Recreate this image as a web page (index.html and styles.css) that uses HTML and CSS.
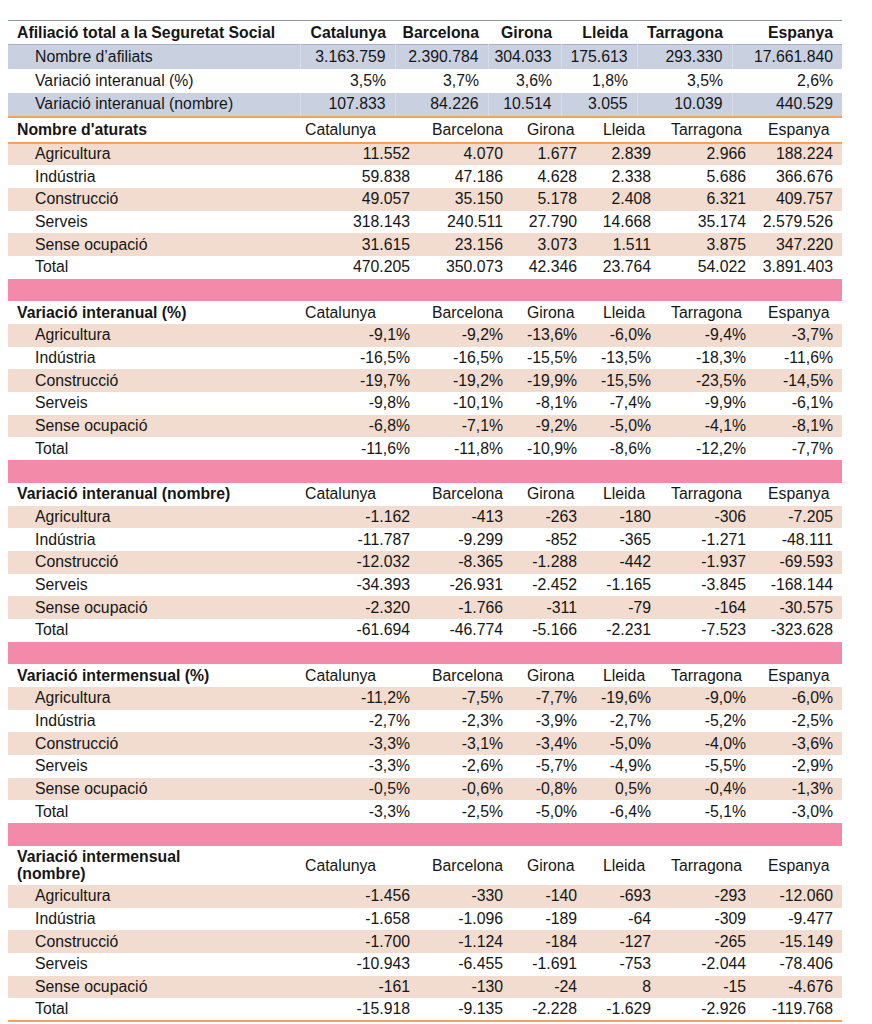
FILE: index.html
```html
<!DOCTYPE html>
<html lang="ca">
<head>
  <meta charset="UTF-8">
  <title>Afiliació i atur</title>
  <link rel="stylesheet" href="styles.css">
</head>
<body>
  <div class="sheet">
    <table class="afil">
      <colgroup>
        <col class="w-a0"><col class="w-a1"><col class="w-a2"><col class="w-a3"><col class="w-a4"><col class="w-a5"><col class="w-a6">
      </colgroup>
      <tr class="head">
        <th class="label">Afiliació total a la Seguretat Social</th>
        <th>Catalunya</th><th>Barcelona</th><th>Girona</th><th>Lleida</th><th>Tarragona</th><th>Espanya</th>
      </tr>
      <tr class="blue">
        <td class="sub">Nombre d’afiliats</td>
        <td>3.163.759</td><td>2.390.784</td><td>304.033</td><td>175.613</td><td>293.330</td><td>17.661.840</td>
      </tr>
      <tr>
        <td class="sub">Variació interanual (%)</td>
        <td>3,5%</td><td>3,7%</td><td>3,6%</td><td>1,8%</td><td>3,5%</td><td>2,6%</td>
      </tr>
      <tr class="blue">
        <td class="sub">Variació interanual (nombre)</td>
        <td>107.833</td><td>84.226</td><td>10.514</td><td>3.055</td><td>10.039</td><td>440.529</td>
      </tr>
    </table>

    <table class="atur">
      <colgroup>
        <col class="w-b0"><col class="w-b1"><col class="w-b2"><col class="w-b3"><col class="w-b4"><col class="w-b5"><col class="w-b6">
      </colgroup>

      <tr class="sec first">
        <th class="label">Nombre d'aturats</th>
        <th>Catalunya</th><th>Barcelona</th><th>Girona</th><th>Lleida</th><th>Tarragona</th><th>Espanya</th>
      </tr>
      <tr class="alt"><td class="sub">Agricultura</td><td>11.552</td><td>4.070</td><td>1.677</td><td>2.839</td><td>2.966</td><td>188.224</td></tr>
      <tr><td class="sub">Indústria</td><td>59.838</td><td>47.186</td><td>4.628</td><td>2.338</td><td>5.686</td><td>366.676</td></tr>
      <tr class="alt"><td class="sub">Construcció</td><td>49.057</td><td>35.150</td><td>5.178</td><td>2.408</td><td>6.321</td><td>409.757</td></tr>
      <tr><td class="sub">Serveis</td><td>318.143</td><td>240.511</td><td>27.790</td><td>14.668</td><td>35.174</td><td>2.579.526</td></tr>
      <tr class="alt"><td class="sub">Sense ocupació</td><td>31.615</td><td>23.156</td><td>3.073</td><td>1.511</td><td>3.875</td><td>347.220</td></tr>
      <tr><td class="sub">Total</td><td>470.205</td><td>350.073</td><td>42.346</td><td>23.764</td><td>54.022</td><td>3.891.403</td></tr>
      <tr class="gap"><td colspan="7"></td></tr>

      <tr class="sec">
        <th class="label">Variació interanual (%)</th>
        <th>Catalunya</th><th>Barcelona</th><th>Girona</th><th>Lleida</th><th>Tarragona</th><th>Espanya</th>
      </tr>
      <tr class="alt"><td class="sub">Agricultura</td><td>-9,1%</td><td>-9,2%</td><td>-13,6%</td><td>-6,0%</td><td>-9,4%</td><td>-3,7%</td></tr>
      <tr><td class="sub">Indústria</td><td>-16,5%</td><td>-16,5%</td><td>-15,5%</td><td>-13,5%</td><td>-18,3%</td><td>-11,6%</td></tr>
      <tr class="alt"><td class="sub">Construcció</td><td>-19,7%</td><td>-19,2%</td><td>-19,9%</td><td>-15,5%</td><td>-23,5%</td><td>-14,5%</td></tr>
      <tr><td class="sub">Serveis</td><td>-9,8%</td><td>-10,1%</td><td>-8,1%</td><td>-7,4%</td><td>-9,9%</td><td>-6,1%</td></tr>
      <tr class="alt"><td class="sub">Sense ocupació</td><td>-6,8%</td><td>-7,1%</td><td>-9,2%</td><td>-5,0%</td><td>-4,1%</td><td>-8,1%</td></tr>
      <tr><td class="sub">Total</td><td>-11,6%</td><td>-11,8%</td><td>-10,9%</td><td>-8,6%</td><td>-12,2%</td><td>-7,7%</td></tr>
      <tr class="gap"><td colspan="7"></td></tr>

      <tr class="sec">
        <th class="label">Variació interanual (nombre)</th>
        <th>Catalunya</th><th>Barcelona</th><th>Girona</th><th>Lleida</th><th>Tarragona</th><th>Espanya</th>
      </tr>
      <tr class="alt"><td class="sub">Agricultura</td><td>-1.162</td><td>-413</td><td>-263</td><td>-180</td><td>-306</td><td>-7.205</td></tr>
      <tr><td class="sub">Indústria</td><td>-11.787</td><td>-9.299</td><td>-852</td><td>-365</td><td>-1.271</td><td>-48.111</td></tr>
      <tr class="alt"><td class="sub">Construcció</td><td>-12.032</td><td>-8.365</td><td>-1.288</td><td>-442</td><td>-1.937</td><td>-69.593</td></tr>
      <tr><td class="sub">Serveis</td><td>-34.393</td><td>-26.931</td><td>-2.452</td><td>-1.165</td><td>-3.845</td><td>-168.144</td></tr>
      <tr class="alt"><td class="sub">Sense ocupació</td><td>-2.320</td><td>-1.766</td><td>-311</td><td>-79</td><td>-164</td><td>-30.575</td></tr>
      <tr><td class="sub">Total</td><td>-61.694</td><td>-46.774</td><td>-5.166</td><td>-2.231</td><td>-7.523</td><td>-323.628</td></tr>
      <tr class="gap"><td colspan="7"></td></tr>

      <tr class="sec">
        <th class="label">Variació intermensual (%)</th>
        <th>Catalunya</th><th>Barcelona</th><th>Girona</th><th>Lleida</th><th>Tarragona</th><th>Espanya</th>
      </tr>
      <tr class="alt"><td class="sub">Agricultura</td><td>-11,2%</td><td>-7,5%</td><td>-7,7%</td><td>-19,6%</td><td>-9,0%</td><td>-6,0%</td></tr>
      <tr><td class="sub">Indústria</td><td>-2,7%</td><td>-2,3%</td><td>-3,9%</td><td>-2,7%</td><td>-5,2%</td><td>-2,5%</td></tr>
      <tr class="alt"><td class="sub">Construcció</td><td>-3,3%</td><td>-3,1%</td><td>-3,4%</td><td>-5,0%</td><td>-4,0%</td><td>-3,6%</td></tr>
      <tr><td class="sub">Serveis</td><td>-3,3%</td><td>-2,6%</td><td>-5,7%</td><td>-4,9%</td><td>-5,5%</td><td>-2,9%</td></tr>
      <tr class="alt"><td class="sub">Sense ocupació</td><td>-0,5%</td><td>-0,6%</td><td>-0,8%</td><td>0,5%</td><td>-0,4%</td><td>-1,3%</td></tr>
      <tr><td class="sub">Total</td><td>-3,3%</td><td>-2,5%</td><td>-5,0%</td><td>-6,4%</td><td>-5,1%</td><td>-3,0%</td></tr>
      <tr class="gap"><td colspan="7"></td></tr>

      <tr class="sec tall">
        <th class="label">Variació intermensual<br>(nombre)</th>
        <th>Catalunya</th><th>Barcelona</th><th>Girona</th><th>Lleida</th><th>Tarragona</th><th>Espanya</th>
      </tr>
      <tr class="alt"><td class="sub">Agricultura</td><td>-1.456</td><td>-330</td><td>-140</td><td>-693</td><td>-293</td><td>-12.060</td></tr>
      <tr><td class="sub">Indústria</td><td>-1.658</td><td>-1.096</td><td>-189</td><td>-64</td><td>-309</td><td>-9.477</td></tr>
      <tr class="alt"><td class="sub">Construcció</td><td>-1.700</td><td>-1.124</td><td>-184</td><td>-127</td><td>-265</td><td>-15.149</td></tr>
      <tr><td class="sub">Serveis</td><td>-10.943</td><td>-6.455</td><td>-1.691</td><td>-753</td><td>-2.044</td><td>-78.406</td></tr>
      <tr class="alt"><td class="sub">Sense ocupació</td><td>-161</td><td>-130</td><td>-24</td><td>8</td><td>-15</td><td>-4.676</td></tr>
      <tr><td class="sub">Total</td><td>-15.918</td><td>-9.135</td><td>-2.228</td><td>-1.629</td><td>-2.926</td><td>-119.768</td></tr>
    </table>
  </div>
</body>
</html>
```

FILE: styles.css
```css
:root {
  --ink: #161616;
  --blue: #c9d1e1;
  --peach: #f2dccf;
  --pink: #f48aa9;
  --orange: #f4a261;
  --steel: #8e97aa;
}

* {
  box-sizing: border-box;
  margin: 0;
  padding: 0;
}

body {
  font-family: "Liberation Sans", Arial, sans-serif;
  font-size: 15.8px;
  color: var(--ink);
  background: #fff;
}

.sheet {
  width: 834px;
  margin-left: 8px;
  padding-top: 20px;
}

table {
  width: 834px;
  border-collapse: collapse;
  table-layout: fixed;
}

td, th {
  white-space: nowrap;
  text-align: right;
  line-height: 18px;
  padding: 0;
}

/* top table: affiliation */
.w-a0 { width: 292px; }
.w-a1 { width: 95px; }
.w-a2 { width: 93px; }
.w-a3 { width: 73px; }
.w-a4 { width: 76px; }
.w-a5 { width: 95px; }
.w-a6 { width: 110px; }

.afil {
  border-top: 1px solid var(--steel);
  border-bottom: 2px solid var(--orange);
}

.afil tr {
  height: 24px;
}

.afil td, .afil th {
  padding-right: 9px;
}

.afil th {
  font-weight: bold;
}

.afil .head {
  border-bottom: 1px solid #a7b0c2;
}

.afil .blue td {
  background: var(--blue);
  border-left: 1px solid #d6dce8;
}

.afil .blue td:first-child {
  border-left: none;
}

.label {
  text-align: left;
  padding-left: 9px;
  font-weight: bold;
}

td.sub {
  text-align: left;
  padding-left: 27px;
}

/* lower table: unemployment */
.w-b0 { width: 289px; }
.w-b1 { width: 122px; }
.w-b2 { width: 93px; }
.w-b3 { width: 74px; }
.w-b4 { width: 74px; }
.w-b5 { width: 95px; }
.w-b6 { width: 87px; }

.atur {
  border-bottom: 2px solid var(--orange);
}

.atur tr {
  height: 22.7px;
}

.atur td {
  padding-right: 9px;
}

.atur .sec th {
  font-weight: normal;
  text-align: left;
}

/* column headings sit at uneven offsets in the source sheet */
.atur .sec th:nth-child(2) { padding-left: 8px; }
.atur .sec th:nth-child(3) { padding-left: 13px; }
.atur .sec th:nth-child(4) { padding-left: 15px; }
.atur .sec th:nth-child(5) { padding-left: 17px; }
.atur .sec th:nth-child(6) { padding-left: 11px; }
.atur .sec th:nth-child(7) { padding-left: 13px; }

.atur .sec th.label {
  font-weight: bold;
  padding-left: 9px;
}

.atur .sec.first {
  height: 25px;
  border-bottom: 2px solid var(--orange);
}

.atur .sec.tall {
  height: 39px;
}

.atur .sec.tall th {
  line-height: 17.5px;
}

.atur .alt td {
  background: var(--peach);
}

.atur .gap td {
  background: var(--pink);
}
```
